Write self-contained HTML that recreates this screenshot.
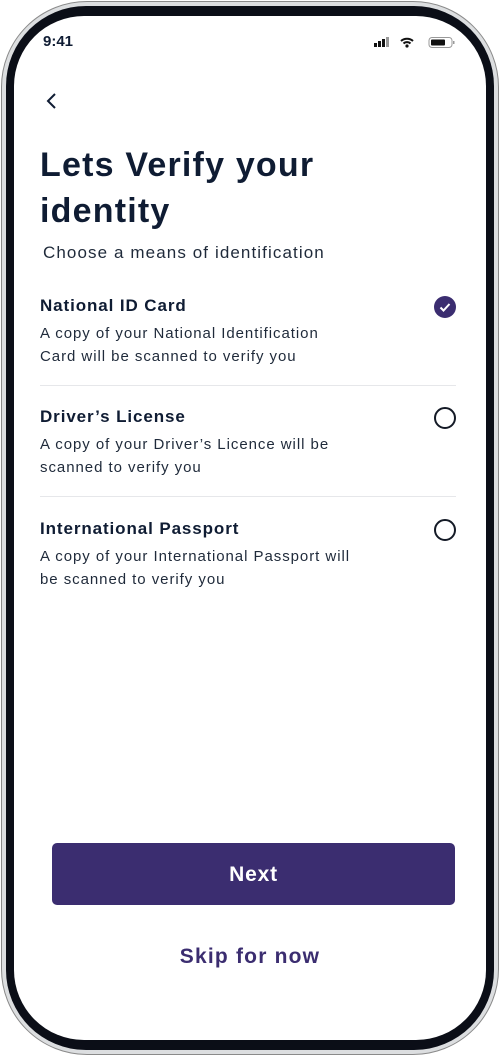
<!DOCTYPE html>
<html><head><meta charset="utf-8"><style>
*{margin:0;padding:0;box-sizing:border-box}
body{width:500px;height:1056px;background:#fff;font-family:"Liberation Sans",sans-serif;position:relative;overflow:hidden}
.outer{position:absolute;left:1px;top:1px;width:498px;height:1054px;border-radius:86px;background:#dcdee0;border:1.5px solid #8a8a8a}
.black{position:absolute;left:6px;top:6px;width:488px;height:1044px;border-radius:80px;background:#0b0e17}
.screen{position:absolute;left:14px;top:16px;width:472px;height:1024px;border-radius:70px;background:#fff;overflow:hidden}
.t{position:absolute;color:#0f1c33}
h1{position:absolute;left:26px;top:126px;font-size:34px;line-height:46px;font-weight:bold;color:#0f1c33;letter-spacing:1.2px}
.opt{position:absolute;left:26px;width:416px}
.opt b{display:block;font-size:17px;color:#0f1c33;height:22px;letter-spacing:.9px}
.opt p{font-size:15px;line-height:23px;color:#1f2a3a;margin-top:4px;letter-spacing:.95px}
.radio{position:absolute;right:0;top:0;width:22px;height:22px;border-radius:50%;border:2px solid #141a26}
.sel{background:#3b2d70;border:none}
.hr{position:absolute;left:26px;width:416px;height:1px;background:#e6e7ea}
.btn{position:absolute;left:38px;top:827px;width:403px;height:62px;border-radius:5px;background:#3b2d70;color:#fff;font-size:21px;font-weight:bold;text-align:center;line-height:64px;letter-spacing:.8px}
.skip{position:absolute;left:0;width:472px;top:929px;text-align:center;font-size:21px;font-weight:bold;color:#3b2d70;letter-spacing:1.2px}
</style></head><body>
<div class="outer"></div><div class="black"></div>
<div class="screen">
<div class="t" style="left:29px;top:17px;font-size:15px;font-weight:bold">9:41</div>
<svg style="position:absolute;left:360px;top:20px" width="100" height="14">
<rect x="0" y="7" width="3" height="4" fill="#111"/><rect x="4" y="5" width="3" height="6" fill="#111"/><rect x="8" y="3" width="3" height="8" fill="#111"/><rect x="12" y="1" width="3" height="10" fill="#999"/>
<path d="M27 5a9 9 0 0 1 12 0M29.5 7.5a5 5 0 0 1 7 0" stroke="#111" stroke-width="2" fill="none"/><circle cx="33" cy="10" r="1.6" fill="#111"/>
<rect x="55" y="1.5" width="23" height="10" rx="3" fill="none" stroke="#999"/><rect x="57" y="3.5" width="14" height="6" rx="1" fill="#111"/><rect x="79" y="5" width="1.5" height="3" fill="#999"/>
</svg>
<svg style="position:absolute;left:30px;top:76px" width="14" height="18"><path d="M11 2L4 9l7 7" stroke="#0f1c33" stroke-width="2" fill="none"/></svg>
<h1>Lets Verify your<br>identity</h1>
<div class="t" style="left:29px;top:227px;font-size:17px;color:#1f2a3a;letter-spacing:1.1px">Choose a means of identification</div>
<div class="opt" style="top:280px"><b>National ID Card</b><p>A copy of your National Identification<br>Card will be scanned to verify you</p>
<div class="radio sel"><svg width="22" height="22"><path d="M6.5 11.5l3 3 6-6.5" stroke="#fff" stroke-width="2" fill="none"/></svg></div></div>
<div class="hr" style="top:369px"></div>
<div class="opt" style="top:391px"><b>Driver’s License</b><p>A copy of your Driver’s Licence will be<br>scanned to verify you</p><div class="radio"></div></div>
<div class="hr" style="top:480px"></div>
<div class="opt" style="top:503px"><b>International Passport</b><p>A copy of your International Passport will<br>be scanned to verify you</p><div class="radio"></div></div>
<div class="btn">Next</div>
<div class="skip">Skip for now</div>
</div>
</body></html>
